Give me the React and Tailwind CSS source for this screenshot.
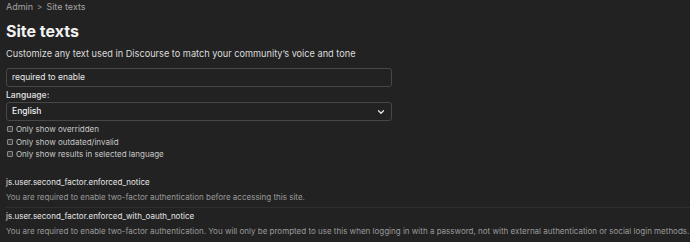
import { ChevronDown } from 'lucide-react';

const filters = [
    'Only show overridden',
    'Only show outdated/invalid',
    'Only show results in selected language',
];

const results = [
    {
        key: 'js.user.second_factor.enforced_notice',
        value: 'You are required to enable two-factor authentication before accessing this site.',
    },
    {
        key: 'js.user.second_factor.enforced_with_oauth_notice',
        value: 'You are required to enable two-factor authentication. You will only be prompted to use this when logging in with a password, not with external authentication or social login methods.',
    },
];

export default function App() {
    return (
        <div className="min-h-screen bg-[#222222] pl-[6px] font-['Inter','Noto_Sans',sans-serif] text-[#dddddd]">
            {/* breadcrumb */}
            <div className="flex items-center gap-[4px] h-[14px] text-[9px] text-[#a3a3a3]">
                <span>Admin</span>
                <span className="text-[8px]">&gt;</span>
                <span>Site texts</span>
            </div>

            <h1 className="mt-[7px] h-[20px] leading-[20px] text-[16px] font-bold text-[#f2f2f2]">Site texts</h1>

            <p className="mt-[6px] h-[14px] leading-[14px] text-[9.2px] text-[#dcdcdc]">
                Customize any text used in Discourse to match your community’s voice and tone
            </p>

            <div className="mt-[7px] w-[386px] h-[19px] flex items-center px-[5px] border border-[#474747] rounded-[3px] text-[8.5px] text-[#e8e8e8]">
                required to enable
            </div>

            <div className="mt-[2px] h-[12px] leading-[12px] text-[8.5px] font-semibold text-[#d6d6d6]">Language:</div>

            <div className="mt-[1px] w-[386px] h-[19px] flex items-center justify-between px-[5px] border border-[#474747] rounded-[3px] text-[8.5px] font-medium text-[#f0f0f0]">
                <span>English</span>
                <ChevronDown size={10} strokeWidth={3} className="text-[#e5e5e5]" />
            </div>

            <div className="mt-[2px] flex flex-col">
                {filters.map((label) => (
                    <label key={label} className="flex items-center gap-[3px] h-[12.5px] text-[8px] text-[#c8c8c8]">
                        <span className="ml-[1px] w-[6px] h-[6px] border border-[#8a8a8a] bg-[#3a3a3a] rounded-[1px]" />
                        {label}
                    </label>
                ))}
            </div>

            <div className="mt-[14px]">
                {results.map((r, i) => (
                    <div key={r.key} className={i > 0 ? 'border-t border-[#2f2f2f] pt-[1px]' : ''}>
                        <div className="h-[14px] leading-[14px] text-[8px] text-[#e6e6e6]">{r.key}</div>
                        <div className="mt-[1px] h-[14px] leading-[14px] text-[8px] text-[#9a9a9a] whitespace-nowrap">{r.value}</div>
                        {i === 0 && <div className="h-[3px]" />}
                    </div>
                ))}
            </div>
        </div>
    );
}
